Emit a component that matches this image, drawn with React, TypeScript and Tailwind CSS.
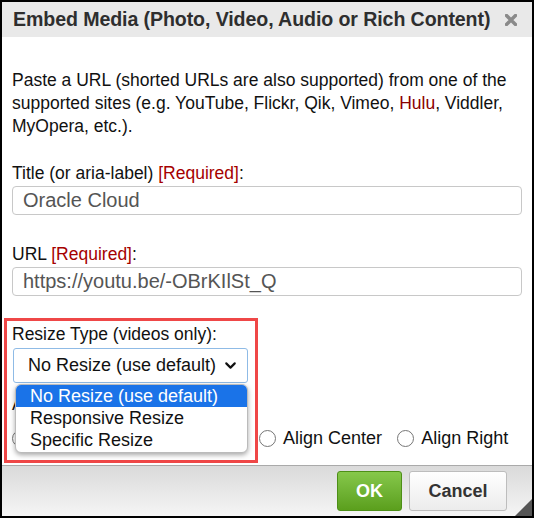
import { ChevronDown } from 'lucide-react'

const font = { fontFamily: '"Liberation Sans", Arial, sans-serif' }

function Radio({ label }: { label: string }) {
  return (
    <label className="flex items-center gap-[7px]">
      <span className="h-[17px] w-[17px] rounded-full border border-[#767676] bg-white" />
      <span>{label}</span>
    </label>
  )
}

export default function App() {
  return (
    <div className="relative h-[518px] w-[534px] bg-black p-[2px] text-[17.5px] text-[#111]" style={font}>
      <div className="flex h-full flex-col bg-white">
        {/* Title bar */}
        <div className="flex h-[35px] shrink-0 items-center justify-between bg-[#e9e9e9] pl-[11px] pr-[15px]">
          <h1 className="text-[19.6px] font-bold tracking-[-0.1px] text-[#2e2e2e]">
            Embed Media (Photo, Video, Audio or Rich Content)
          </h1>
          <svg width="12" height="12" viewBox="0 0 12 12" className="mt-[1px]">
            <path d="M1.5 1.5 L10.5 10.5 M10.5 1.5 L1.5 10.5" stroke="#8a8a8a" strokeWidth="3.4" strokeLinecap="square" />
          </svg>
        </div>

        {/* Body */}
        <div className="flex-1 px-[10px] pt-[32px] leading-[23px]">
          <p className="mb-[24px]">
            Paste a URL (shorted URLs are also supported) from one of the supported sites (e.g. YouTube,
            Flickr, Qik, Vimeo, <span className="text-[#8b0000]">Hulu</span>, Viddler, MyOpera, etc.).
          </p>

          <div>
            Title (or aria-label) <span className="text-[#a50000]">[Required]</span>:
          </div>
          <div className="mt-[1px] flex h-[29px] items-center rounded-[4px] border border-[#c8c8c8] px-[10px] text-[20px] text-[#555]">
            Oracle Cloud
          </div>

          <div className="mt-[28px]">
            URL <span className="text-[#a50000]">[Required]</span>:
          </div>
          <div className="mt-[1px] flex h-[29px] items-center rounded-[4px] border border-[#c8c8c8] px-[10px] text-[20px] text-[#555]">
            https://youtu.be/-OBrKIlSt_Q
          </div>

          <div className="mt-[27px]">Resize Type (videos only):</div>
          <div className="relative ml-[1px] mt-[2px] w-[235px] text-[18px]">
            <div className="flex h-[35px] items-center justify-between rounded-[3px] border border-[#8fbbe6] pl-[14px] pr-[8px]">
              <span>No Resize (use default)</span>
              <ChevronDown size={17} strokeWidth={3} className="text-[#111]" />
            </div>
            {/* open dropdown list */}
            <div className="absolute left-[2px] top-[36px] z-10 w-[233px] overflow-hidden rounded-[6px] border border-[#bbb] bg-white leading-[22px] shadow-[0_2px_5px_rgba(0,0,0,0.35)]">
              <div className="bg-[#1a73e8] pl-[14px] text-white">No Resize (use default)</div>
              <div className="pl-[14px]">Responsive Resize</div>
              <div className="pb-[1px] pl-[14px]">Specific Resize</div>
            </div>
          </div>

          <div className="mt-[10px]">Alignment:</div>
          <div className="mt-[11px] flex items-center text-[18px]">
            <Radio label="Align Left" />
            <div className="ml-[148px]">
              <Radio label="Align Center" />
            </div>
            <div className="ml-[15px]">
              <Radio label="Align Right" />
            </div>
          </div>
        </div>

        {/* Footer */}
        <div className="relative flex h-[51px] shrink-0 items-center justify-end gap-[7px] border-t border-[#aaa] bg-gradient-to-b from-[#dadada] to-[#f5f5f5] pr-[25px]">
          <button className="h-[40px] w-[65px] rounded-[3px] border border-[#4d8f17] bg-gradient-to-b from-[#86c84a] to-[#5b9f1c] text-[18px] font-bold text-white">
            OK
          </button>
          <button className="h-[40px] w-[98px] rounded-[3px] border border-[#bdbdbd] bg-gradient-to-b from-[#ffffff] to-[#ececec] text-[18px] font-bold text-[#333]">
            Cancel
          </button>
          <svg width="17" height="17" viewBox="0 0 17 17" className="absolute bottom-0 right-0">
            <path d="M17 0 L17 17 L0 17 Z" fill="#555" />
          </svg>
        </div>
      </div>

      {/* red annotation box */}
      <div className="pointer-events-none absolute left-[4px] top-[318px] h-[145px] w-[254px] border-[3px] border-[#ef4747]" />
    </div>
  )
}
